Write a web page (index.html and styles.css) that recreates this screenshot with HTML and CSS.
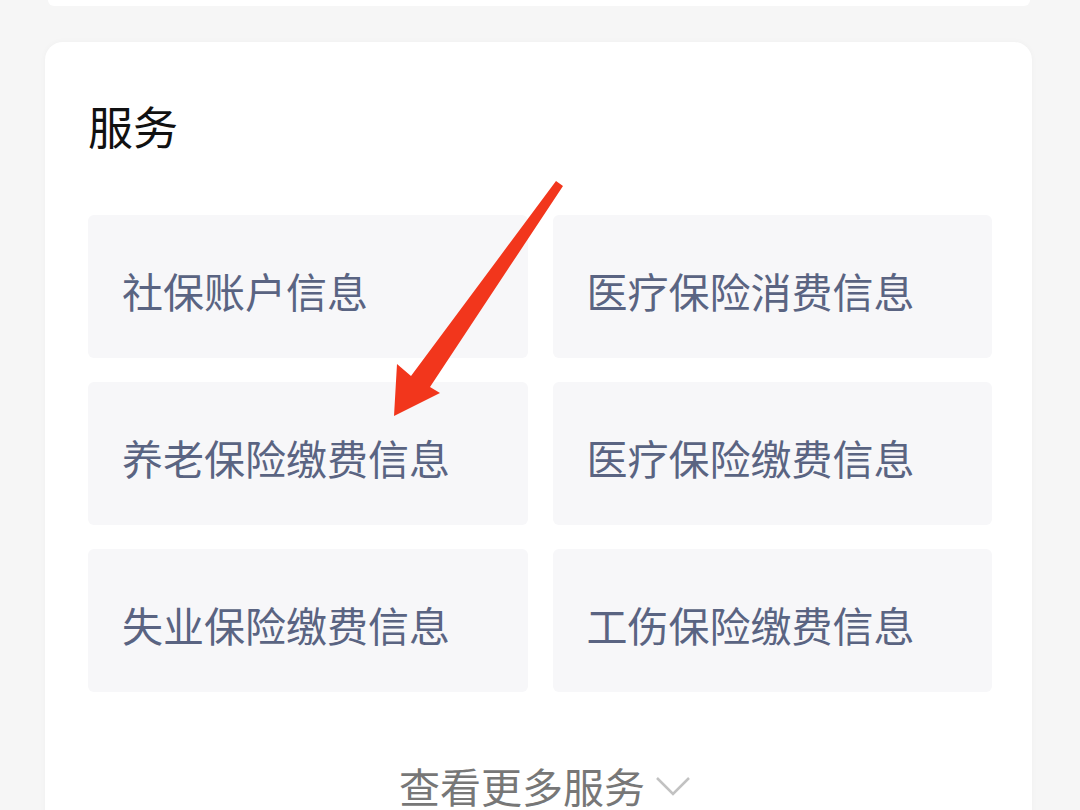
FILE: index.html
```html
<!DOCTYPE html>
<html lang="zh-CN">
<head>
    <meta charset="UTF-8">
    <meta name="viewport" content="width=device-width, initial-scale=1.0">
    <title>服务</title>
    <link rel="stylesheet" href="styles.css">
</head>
<body>
    <div class="top-card"></div>

    <div class="card">
        <h2 class="card-title">服务</h2>
        <div class="service-grid">
            <div class="service-item">社保账户信息</div>
            <div class="service-item">医疗保险消费信息</div>
            <div class="service-item">养老保险缴费信息</div>
            <div class="service-item">医疗保险缴费信息</div>
            <div class="service-item">失业保险缴费信息</div>
            <div class="service-item">工伤保险缴费信息</div>
        </div>
        <div class="more">
            <span>查看更多服务</span>
            <svg class="chevron" width="36" height="22" viewBox="0 0 36 22">
                <polyline points="2,3 18,19 34,3" fill="none" stroke="#c2c2c2" stroke-width="2.5"/>
            </svg>
        </div>
    </div>

    <!-- annotation arrow drawn over the screenshot -->
    <svg class="arrow" width="1080" height="810" viewBox="0 0 1080 810">
        <polygon points="556,181 563,186 430,387 440,393 394,416 397,364 411,376" fill="#f2361c"/>
    </svg>
</body>
</html>
```

FILE: styles.css
```css
body {
    margin: 0;
    background: #f6f6f6;
    font-family: "Noto Sans CJK SC", "Noto Sans", sans-serif;
    height: 810px;
    overflow: hidden;
}

.top-card {
    height: 6px;
    margin: 0 50px 0 48px;
    background: #fff;
    border-radius: 0 0 14px 14px;
}

.card {
    margin: 36px 48px 0 45px;
    padding: 57px 40px 0 43px;
    background: #fff;
    border-radius: 18px;
    box-shadow: 0 0 6px rgba(0, 0, 0, 0.03);
    height: 900px;
    box-sizing: border-box;
}

.card-title {
    margin: 0 0 62px;
    font-size: 45px;
    line-height: 54px;
    font-weight: normal;
    color: #111;
}

.service-grid {
    display: grid;
    grid-template-columns: 1fr 1fr;
    column-gap: 25px;
    row-gap: 24px;
}

.service-item {
    height: 143px;
    display: flex;
    align-items: center;
    padding: 6px 0 0 34px;
    box-sizing: border-box;
    background: #f7f7f9;
    border-radius: 6px;
    font-size: 41px;
    color: #5a6482;
}

.more {
    margin-top: 68px;
    padding-left: 10px;
    display: flex;
    justify-content: center;
    align-items: center;
    gap: 10px;
    font-size: 41px;
    line-height: 50px;
    color: #777;
}

.chevron {
    margin-top: 2px;
}

.arrow {
    position: absolute;
    top: 0;
    left: 0;
    pointer-events: none;
}
```
